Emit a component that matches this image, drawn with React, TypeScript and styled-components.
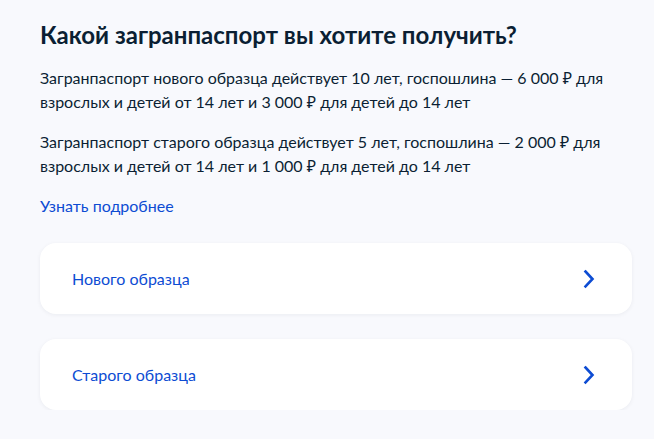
import styled, { createGlobalStyle } from 'styled-components'

const GlobalStyle = createGlobalStyle`
    html, body {
        margin: 0;
        padding: 0;
        background: #f8f9fd;
        font-family: Lato, "Noto Sans", sans-serif;
        color: #0b1f33;
    }
`
const Pagina = styled.div`
    width: 592px;
    padding: 19px 0 0 40px;
`
const Titulo = styled.h1`
    font-size: 24px;
    line-height: 32px;
    font-weight: 700;
    margin: 0 0 15px;
`
const Paragrafo = styled.p`
    font-size: 16px;
    line-height: 24px;
    margin: 0 0 16px;
`
const Link = styled.a`
    display: block;
    font-size: 16px;
    line-height: 24px;
    color: #0d4cd3;
    text-decoration: none;
    margin-bottom: 25px;
`
const Lista = styled.div`
    display: flex;
    flex-direction: column;
    gap: 25px;
`
const Cartao = styled.div`
    display: flex;
    align-items: center;
    justify-content: space-between;
    background: #ffffff;
    border-radius: 16px;
    box-shadow: 0 1px 4px rgba(11, 31, 51, 0.06);
    padding: 24px 37px 23px 32px;
    font-size: 16px;
    line-height: 24px;
    color: #0d4cd3;
`

function Seta() {
    return (
        <svg width="12" height="20" viewBox="0 0 12 20">
            <path d="M2.5 2.5 L9.5 10 L2.5 17.5" fill="none" stroke="#0d4cd3" strokeWidth="2.6" strokeLinecap="square" />
        </svg>
    )
}

export default function App() {
    return (<>
        <GlobalStyle />
        <Pagina>
            <Titulo>Какой загранпаспорт вы хотите получить?</Titulo>
            <Paragrafo>Загранпаспорт нового образца действует 10 лет, госпошлина — 6 000 ₽ для взрослых и детей от 14 лет и 3 000 ₽ для детей до 14 лет</Paragrafo>
            <Paragrafo>Загранпаспорт старого образца действует 5 лет, госпошлина — 2 000 ₽ для взрослых и детей от 14 лет и 1 000 ₽ для детей до 14 лет</Paragrafo>
            <Link href="#">Узнать подробнее</Link>
            <Lista>
                <Cartao>Нового образца<Seta /></Cartao>
                <Cartao>Старого образца<Seta /></Cartao>
            </Lista>
        </Pagina>
    </>)
}
